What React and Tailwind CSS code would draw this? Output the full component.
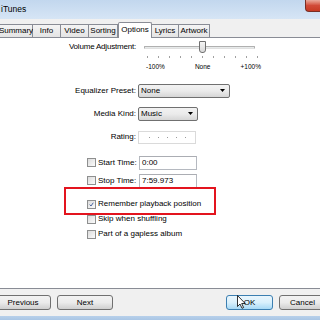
import React from "react";

const Tab = ({ label, w, first, selected }) =>
  selected ? (
    <div
      className={`h-[16px] ${w} bg-white border border-b-0 border-[#898c95] flex items-center justify-center relative z-10 mb-[-1px] rounded-t-[2px]`}
    >
      <span className="mt-[-1px]">{label}</span>
    </div>
  ) : (
    <div
      className={`h-[13px] ${w} bg-gradient-to-b from-[#f4f4f4] to-[#e4e4e4] border-t border-r ${first ? "border-l" : ""} border-[#898c95] flex items-center justify-center`}
    >
      <span>{label}</span>
    </div>
  );

const Dropdown = ({ text, w }) => (
  <div
    className={`${w} h-[14px] rounded-[2px] border border-[#707070] bg-gradient-to-b from-[#f2f2f2] via-[#ebebeb] to-[#d6d6d6] flex items-center justify-between pl-[2px] pr-[4px]`}
  >
    <span>{text}</span>
    <svg width="5" height="3" viewBox="0 0 5 3">
      <path d="M0 0H5L2.5 3Z" fill="#000" />
    </svg>
  </div>
);

const Check = ({ checked }) => (
  <div className="w-[9px] h-[9px] border border-[#8e8f8f] bg-gradient-to-br from-[#dcdcdc] to-[#fbfbfb] p-[1px] flex items-center justify-center">
    {checked && (
      <svg width="7" height="7" viewBox="0 0 7 7">
        <path d="M1 3.6L2.8 5.6L6 1" stroke="#3d5a98" strokeWidth="1.3" fill="none" />
      </svg>
    )}
  </div>
);

const Input = ({ text }) => (
  <div className="w-[58px] h-[14px] border border-[#b5b9c0] border-t-[#abadb3] bg-white flex items-center pl-[2px]">
    {text}
  </div>
);

const Button = ({ label, w, focus }) => (
  <div
    className={`${w} h-[15px] shrink-0 rounded-[3px] border flex items-center justify-center ${
      focus
        ? "border-[#3c7fb1] bg-gradient-to-b from-[#eaf6fd] via-[#d9f0fc] to-[#a7d9f5]"
        : "border-[#707070] bg-gradient-to-b from-[#f2f2f2] via-[#ebebeb] to-[#cfcfcf]"
    }`}
  >
    {label}
  </div>
);

export default function App() {
  const ticks = Array.from({ length: 11 });
  return (
    <div
      className="w-[320px] h-[320px] overflow-hidden bg-[#f0f0f0] flex flex-col relative text-[8px] leading-none text-black"
      style={{ fontFamily: '"Liberation Sans", Arial, sans-serif' }}
    >
      {/* Title bar */}
      <div className="h-[19px] shrink-0 flex items-start justify-between bg-gradient-to-b from-[#c2d7ee] to-[#d6e5f5]">
        <span className="text-[8.5px] mt-[5px] ml-[1px]">iTunes</span>
        <div className="w-[15px] h-[12px] rounded-bl-[4px] border border-t-0 border-r-0 border-[#7a2e24] bg-gradient-to-b from-[#e9a99c] via-[#d14a38] to-[#c73a22]" />
      </div>

      {/* Tabs */}
      <div className="h-[18px] shrink-0 flex items-end ml-[-1px]">
        <Tab label="Summary" w="w-[34px]" first />
        <Tab label="Info" w="w-[28px]" />
        <Tab label="Video" w="w-[28px]" />
        <Tab label="Sorting" w="w-[29px]" />
        <Tab label="Options" w="w-[34px]" selected />
        <Tab label="Lyrics" w="w-[27px]" />
        <Tab label="Artwork" w="w-[31px]" />
      </div>

      {/* Panel */}
      <div className="h-[252px] shrink-0 bg-white border-t border-b border-[#898c95] flex flex-col">
        {/* Volume */}
        <div className="flex items-center mt-[3px] h-[12px]">
          <div className="w-[136px] text-right tracking-[-0.2px]">Volume Adjustment:</div>
          <div className="ml-[3px] w-[121px] h-[12px] relative flex items-center">
            <div className="mx-[5px] flex-1 h-[3px] bg-[#e7eaea] border border-[#b0b0b0] border-b-[#e0e0e0] rounded-[1px]" />
            <div className="absolute left-[60px] top-0 w-[7px] h-[12px] rounded-b-[3px] border border-[#707070] bg-gradient-to-b from-[#f5f5f5] to-[#d9d9d9]" />
          </div>
        </div>
        <div className="flex ml-[147px] gap-[10px] mt-[3px]">
          {ticks.map((_, i) => (
            <div key={i} className="w-[1px] h-[2px] bg-[#a0a0a0]" />
          ))}
        </div>
        <div className="flex justify-between ml-[146px] w-[115px] mt-[6px] text-[6.5px]">
          <span>-100%</span>
          <span>None</span>
          <span>+100%</span>
        </div>

        {/* Equalizer */}
        <div className="flex items-center mt-[13px]">
          <div className="w-[136px] text-right">Equalizer Preset:</div>
          <div className="ml-[2px]">
            <Dropdown text="None" w="w-[92px]" />
          </div>
        </div>
        {/* Media Kind */}
        <div className="flex items-center mt-[9px]">
          <div className="w-[136px] text-right">Media Kind:</div>
          <div className="ml-[2px]">
            <Dropdown text="Music" w="w-[60px]" />
          </div>
        </div>
        {/* Rating */}
        <div className="flex items-center mt-[10px]">
          <div className="w-[136px] text-right">Rating:</div>
          <div className="ml-[2px] w-[58px] h-[13px] border border-[#dadada] bg-white flex items-center pl-[10px] gap-[8px]">
            {[0, 1, 2, 3, 4].map((i) => (
              <div key={i} className="w-[1px] h-[1px] bg-[#9a9a9a]" />
            ))}
          </div>
        </div>

        {/* Start */}
        <div className="flex items-center mt-[12px]">
          <div className="w-[139px] flex items-center pl-[87px]">
            <Check />
            <span className="ml-[2px]">Start Time:</span>
          </div>
          <Input text="0:00" />
        </div>
        {/* Stop */}
        <div className="flex items-center mt-[4px]">
          <div className="w-[139px] flex items-center pl-[87px]">
            <Check />
            <span className="ml-[2px]">Stop Time:</span>
          </div>
          <Input text="7:59.973" />
        </div>

        {/* Checkboxes */}
        <div className="flex items-center mt-[12px] pl-[87px]">
          <Check checked />
          <span className="ml-[2px]">Remember playback position</span>
        </div>
        <div className="flex items-center mt-[6px] pl-[87px]">
          <Check />
          <span className="ml-[2px]">Skip when shuffling</span>
        </div>
        <div className="flex items-center mt-[6px] pl-[87px]">
          <Check />
          <span className="ml-[2px]">Part of a gapless album</span>
        </div>
      </div>

      {/* Buttons */}
      <div className="flex mt-[6px] ml-[-5px]">
        <Button label="Previous" w="w-[56px]" />
        <div className="ml-[6px]">
          <Button label="Next" w="w-[56px]" />
        </div>
        <div className="ml-[113px]">
          <Button label="OK" w="w-[47px]" focus />
        </div>
        <div className="ml-[6px]">
          <Button label="Cancel" w="w-[47px]" />
        </div>
      </div>

      <div className="mt-auto h-[4px] bg-gradient-to-b from-[#b7d0ea] to-[#a9c6e5]" />

      {/* Red annotation box */}
      <div className="absolute left-[64px] top-[187px] w-[152px] h-[28px] border-[2px] border-[#e3141e]" />

      {/* Mouse cursor */}
      <svg className="absolute left-[237px] top-[295px]" width="9" height="14" viewBox="0 0 9 14">
        <path d="M0.5 0.5V11.5L3 9L5 13.3L6.6 12.6L4.7 8.5H8.2Z" fill="#fff" stroke="#000" strokeWidth="0.8" />
      </svg>
    </div>
  );
}
